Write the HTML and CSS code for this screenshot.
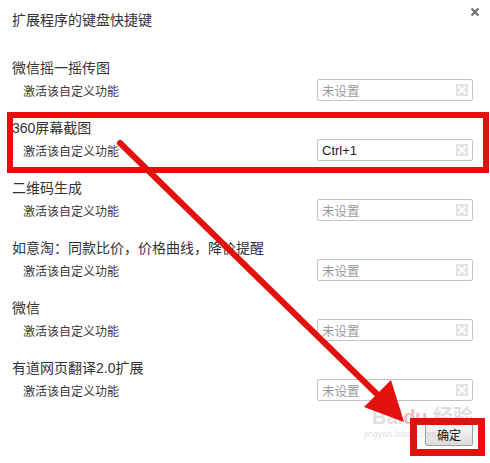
FILE: index.html
```html
<!DOCTYPE html>
<html lang="zh-CN">
<head>
  <meta charset="UTF-8" />
  <title>扩展程序的键盘快捷键</title>
  <link rel="stylesheet" href="styles.css">
</head>
<body>
  <div class="dialog">
    <div class="dialog-head">
      <h1>扩展程序的键盘快捷键</h1>
      <svg class="close" width="10" height="10" viewBox="0 0 10 10">
        <path d="M1.5 1.5 L8.5 8.5 M8.5 1.5 L1.5 8.5" stroke="#6f6f6f" stroke-width="2.2" />
      </svg>
    </div>

    <div class="list">
      <div class="group">
        <h3>微信摇一摇传图</h3>
        <div class="item">
          <span>激活该自定义功能</span>
          <div class="key empty">未设置<i class="clear"></i></div>
        </div>
      </div>
      <div class="group">
        <h3>360屏幕截图</h3>
        <div class="item">
          <span>激活该自定义功能</span>
          <div class="key">Ctrl+1<i class="clear"></i></div>
        </div>
      </div>
      <div class="group">
        <h3>二维码生成</h3>
        <div class="item">
          <span>激活该自定义功能</span>
          <div class="key empty">未设置<i class="clear"></i></div>
        </div>
      </div>
      <div class="group">
        <h3>如意淘：同款比价，价格曲线，降价提醒</h3>
        <div class="item">
          <span>激活该自定义功能</span>
          <div class="key empty">未设置<i class="clear"></i></div>
        </div>
      </div>
      <div class="group">
        <h3>微信</h3>
        <div class="item">
          <span>激活该自定义功能</span>
          <div class="key empty">未设置<i class="clear"></i></div>
        </div>
      </div>
      <div class="group">
        <h3>有道网页翻译2.0扩展</h3>
        <div class="item">
          <span>激活该自定义功能</span>
          <div class="key empty">未设置<i class="clear"></i></div>
        </div>
      </div>
    </div>

    <div class="actions">
      <button class="ok">确定</button>
    </div>
  </div>

  <div class="watermark">
    <div class="wm-logo">Bai<span>du</span> 经验</div>
    <div class="wm-url">jingyan.baidu.com</div>
  </div>

  <!-- annotations drawn over the screenshot -->
  <svg class="marks" width="490" height="463" viewBox="0 0 490 463">
    <rect x="10" y="115" width="476" height="55" fill="none" stroke="#e3110d" stroke-width="6" />
    <rect x="413.5" y="421.5" width="68" height="31" fill="none" stroke="#e3110d" stroke-width="7" />
    <line x1="120" y1="143" x2="384" y2="401" stroke="#e3110d" stroke-width="6" stroke-linecap="round" />
    <polygon points="404,422 364,407 391,380" fill="#e3110d" />
  </svg>
</body>
</html>
```

FILE: styles.css
```css
body {
  margin: 0;
  width: 490px;
  height: 463px;
  overflow: hidden;
  background: #fff;
  color: #333;
  font-family: "Liberation Sans", "Noto Sans CJK SC", sans-serif;
  position: relative;
}

.dialog {
  padding: 10px 17px 0 12px;
}

.dialog-head {
  display: flex;
  justify-content: space-between;
  align-items: flex-start;
  height: 48px;
}

.dialog-head h1 {
  margin: 0;
  font-size: 14px;
  font-weight: normal;
  line-height: 20px;
}

.close {
  margin-top: -3px;
  margin-right: -7px;
}

.group {
  height: 60px;
}

.group h3 {
  margin: 0 0 1px;
  font-size: 14px;
  font-weight: normal;
  line-height: 20px;
  white-space: nowrap;
}

.item {
  display: flex;
  justify-content: space-between;
  align-items: center;
  padding-left: 11px;
  font-size: 12px;
  color: #3a3a3a;
}

.key {
  width: 156px;
  height: 22px;
  box-sizing: border-box;
  border: 1px solid #c4c4c4;
  border-radius: 2px;
  padding: 0 4px 0 4px;
  display: flex;
  align-items: center;
  justify-content: space-between;
  font-size: 13px;
  color: #222;
}

.key.empty {
  color: #9a9a9a;
  font-size: 12.5px;
}

.clear {
  width: 12px;
  height: 12px;
  background: #e4e4e4;
  position: relative;
}

.clear::before,
.clear::after {
  content: "";
  position: absolute;
  left: 1px;
  top: 5px;
  width: 10px;
  height: 2px;
  background: #fff;
  transform: rotate(45deg);
}

.clear::after {
  transform: rotate(-45deg);
}

.actions {
  display: flex;
  justify-content: flex-end;
  margin-top: 5px;
}

.ok {
  width: 48px;
  height: 23px;
  border: 1px solid #a0a0a0;
  border-radius: 2px;
  background: linear-gradient(to bottom, #fafafa, #dcdcdc);
  font-family: "Liberation Sans", "Noto Sans CJK SC", sans-serif;
  font-size: 12px;
  color: #111;
  padding: 0;
}

.watermark {
  position: absolute;
  left: 372px;
  top: 406px;
  color: rgba(170, 170, 170, 0.4);
  font-family: "Liberation Sans", "Noto Sans CJK SC", sans-serif;
  pointer-events: none;
}

.wm-logo {
  font-size: 20px;
  font-weight: bold;
  line-height: 22px;
}

.wm-logo span {
  color: rgba(200, 80, 80, 0.4);
}

.wm-url {
  font-size: 9px;
  line-height: 12px;
  margin-left: -8px;
}

.marks {
  position: absolute;
  left: 0;
  top: 0;
  pointer-events: none;
}
```
